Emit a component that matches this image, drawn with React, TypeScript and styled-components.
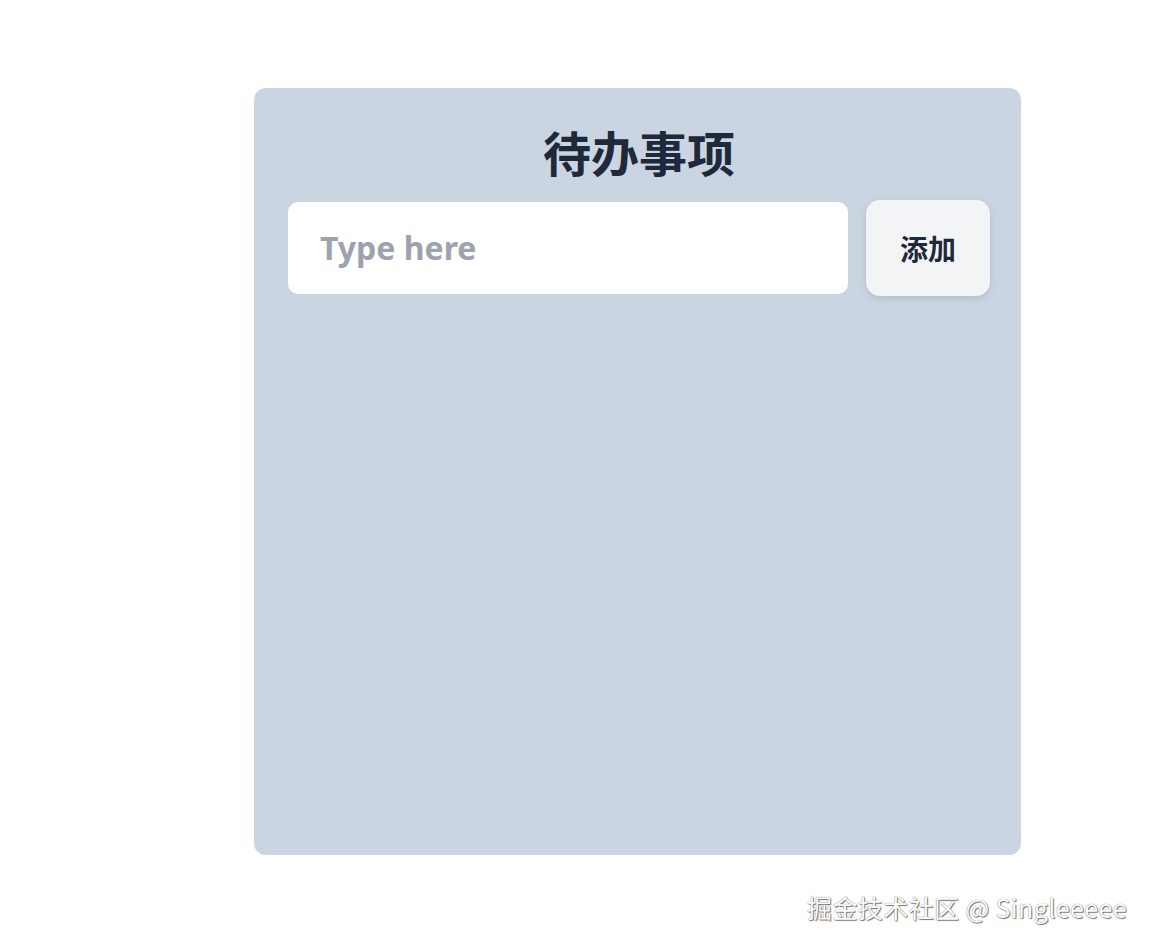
import styled, { createGlobalStyle } from 'styled-components';

const GlobalStyle = createGlobalStyle`
  html, body {
    margin: 0;
    padding: 0;
    background: #ffffff;
  }
  body {
    font-family: 'Noto Sans', 'Noto Sans CJK SC', sans-serif;
  }
`;

const Page = styled.div`
  position: relative;
  width: 1153px;
  height: 949px;
  padding: 88px 0 0 254px;
  box-sizing: border-box;
`;

const Card = styled.div`
  width: 767px;
  height: 767px;
  box-sizing: border-box;
  padding: 31px 31px 0 34px;
  background: #cbd5e1;
  border-radius: 12px;
  display: flex;
  flex-direction: column;
  gap: 16px;
`;

const Title = styled.h1`
  margin: 0;
  text-align: center;
  color: #1e293b;
  font-size: 48px;
  font-weight: 700;
  line-height: 1.35;
  font-family: 'Noto Sans CJK SC', 'Noto Sans', sans-serif;
`;

const InputRow = styled.div`
  display: flex;
  align-items: center;
  gap: 18px;
`;

const TodoInput = styled.input`
  width: 560px;
  height: 92px;
  box-sizing: border-box;
  border: none;
  outline: none;
  border-radius: 10px;
  background: #ffffff;
  padding: 0 32px;
  font-size: 32px;
  font-weight: 700;
  color: #1e293b;
  font-family: 'Noto Sans', 'Noto Sans CJK SC', sans-serif;

  &::placeholder {
    color: #9ca3af;
  }
`;

const AddButton = styled.button`
  width: 124px;
  height: 96px;
  border: none;
  border-radius: 14px;
  background: #f3f4f6;
  box-shadow: 0 2px 6px rgba(100, 116, 139, 0.25);
  color: #1e293b;
  font-size: 28px;
  font-weight: 700;
  font-family: 'Noto Sans CJK SC', sans-serif;
  cursor: pointer;
`;

const Watermark = styled.div`
  position: absolute;
  right: 26px;
  bottom: 24px;
  color: #ffffff;
  font-size: 25px;
  letter-spacing: 0.4px;
  font-family: 'Noto Sans CJK SC', 'Noto Sans', sans-serif;
  text-shadow: 0 0 1px #555, 1px 1px 1px #777;
`;

export default function App() {
  return (
    <>
      <GlobalStyle />
      <Page>
        <Card>
          <Title>待办事项</Title>
          <InputRow>
            <TodoInput placeholder="Type here" />
            <AddButton>添加</AddButton>
          </InputRow>
        </Card>
        <Watermark>掘金技术社区 @ Singleeeee</Watermark>
      </Page>
    </>
  );
}
